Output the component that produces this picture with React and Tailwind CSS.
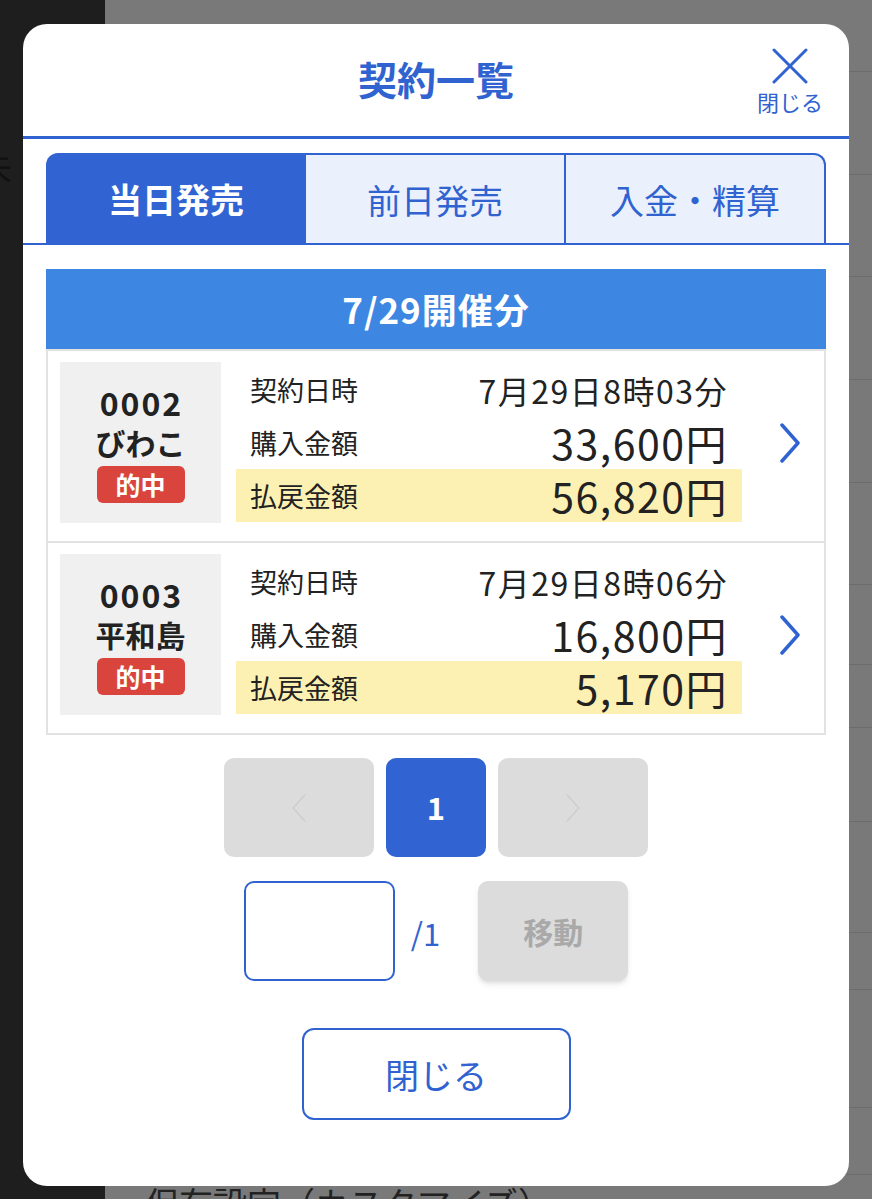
import React from 'react';

const contracts = [
  { no: '0002', place: 'びわこ', date: '7月29日8時03分', buy: '33,600円', pay: '56,820円' },
  { no: '0003', place: '平和島', date: '7月29日8時06分', buy: '16,800円', pay: '5,170円' },
];

const Chevron = ({ dir = 'right', className = '', stroke = 3 }) => (
  <svg viewBox="0 0 22 40" className={className} fill="none" stroke="currentColor" strokeWidth={stroke} strokeLinecap="round" strokeLinejoin="round">
    {dir === 'right' ? <polyline points="3,2 19,20 3,38" /> : <polyline points="19,2 3,20 19,38" />}
  </svg>
);

const ContractCard = ({ item, first }) => (
  <div className={`flex items-center border-2 border-[#e2e2e2] ${first ? '' : 'border-t-0'} pl-3 pt-[11px] pb-[18px]`}>
    <div className="w-[161px] h-[161px] bg-[#f0f0f0] flex flex-col items-center justify-center text-[#222]">
      <div className="text-[32px] font-bold leading-[40px] tracking-[2px] pl-[2px]">{item.no}</div>
      <div className="text-[30px] font-bold leading-[40px]">{item.place}</div>
      <div className="mt-1 h-[37px] w-[88px] rounded-[6px] bg-[#d9453d] text-white text-[25px] font-bold leading-[37px] text-center">的中</div>
    </div>
    <div className="ml-[15px] w-[506px] flex flex-col text-[#222]">
      <div className="h-[53px] flex items-center justify-between px-[14px]">
        <span className="text-[27px] leading-none">契約日時</span>
        <span className="text-[32px] leading-none tracking-[1.5px]">{item.date}</span>
      </div>
      <div className="h-[53px] flex items-center justify-between px-[14px]">
        <span className="text-[27px] leading-none">購入金額</span>
        <span className="text-[41px] leading-none tracking-[1.5px]">{item.buy}</span>
      </div>
      <div className="h-[53px] flex items-center justify-between px-[14px] bg-[#fcf1b2]">
        <span className="text-[27px] leading-none">払戻金額</span>
        <span className="text-[41px] leading-none tracking-[1.5px]">{item.pay}</span>
      </div>
    </div>
    <div className="flex-1 flex justify-center">
      <Chevron stroke={3.5} className="w-[22px] h-[40px] text-[#3063d0] ml-[14px]" />
    </div>
  </div>
);

export default function App() {
  return (
    <div className="relative w-[872px] h-[1199px] overflow-hidden flex font-['Noto_Sans_CJK_JP','Noto_Sans',sans-serif]">
      {/* background page */}
      <div className="w-[105px] bg-[#1e1e1e] pt-[150px]">
        <div className="text-[34px] text-[#111] -ml-[22px] leading-none">未</div>
      </div>
      <div className="flex-1 bg-[#797979] flex flex-col">
        {[72, 103, 102, 103, 103, 102, 80, 63, 94, 111, 57, 118, 67].map((h, i) => (
          <div key={i} style={{ height: h }} className="border-b border-[#6c6c6c] shrink-0" />
        ))}
        <div className="mt-auto h-[13px] overflow-hidden">
          <div className="text-[34px] text-[#222] leading-none ml-[40px]">保存設定（カスタマイズ）</div>
        </div>
      </div>

      {/* modal */}
      <div className="absolute left-[23px] top-[24px] w-[826px] h-[1162px] bg-white rounded-[24px] flex flex-col">
        <div className="relative h-[112px] flex items-center justify-center">
          <h1 className="text-[39px] font-bold text-[#3063d0] -mt-[4px]">契約一覧</h1>
          <div className="absolute right-[26px] top-[24px] flex flex-col items-center text-[#3063d0]">
            <svg viewBox="0 0 36 36" className="w-[36px] h-[36px]" stroke="currentColor" strokeWidth="3" strokeLinecap="round">
              <line x1="2" y1="2" x2="34" y2="34" />
              <line x1="34" y1="2" x2="2" y2="34" />
            </svg>
            <span className="text-[22px] leading-[28px] mt-[3px]">閉じる</span>
          </div>
        </div>
        <div className="h-[3px] bg-[#3063d0]" />

        {/* tabs */}
        <div className="pt-[14px] px-[23px] border-b-2 border-[#3063d0]">
          <div className="grid grid-cols-3 h-[90px]">
            <div className="bg-[#3164d2] rounded-tl-[12px] flex items-center justify-center text-white text-[34px] font-bold">当日発売</div>
            <div className="bg-[#eaf1fd] border-t-2 border-r-2 border-[#3063d0] flex items-center justify-center text-[#3063d0] text-[34px]">前日発売</div>
            <div className="bg-[#eaf1fd] border-t-2 border-r-2 border-[#3063d0] rounded-tr-[12px] flex items-center justify-center text-[#3063d0] text-[34px]">入金・精算</div>
          </div>
        </div>

        <div className="px-[23px] mt-[24px]">
          <div className="h-[80px] bg-[#3d87e2] flex items-center justify-center text-white text-[35px] font-bold tracking-[1px]">7/29開催分</div>
          {contracts.map((c, i) => (
            <ContractCard key={c.no} item={c} first={i === 0} />
          ))}
        </div>

        {/* pagination */}
        <div className="mt-[23px] flex justify-center gap-3">
          <div className="w-[150px] h-[99px] rounded-[10px] bg-[#dcdcdc] flex items-center justify-center">
            <Chevron dir="left" stroke={2} className="w-[16px] h-[30px] text-[#cdcdcd]" />
          </div>
          <div className="w-[100px] h-[99px] rounded-[10px] bg-[#3164d2] flex items-center justify-center text-white text-[31px] font-bold">1</div>
          <div className="w-[150px] h-[99px] rounded-[10px] bg-[#dcdcdc] flex items-center justify-center">
            <Chevron dir="right" stroke={2} className="w-[16px] h-[30px] text-[#cdcdcd]" />
          </div>
        </div>

        <div className="mt-[24px] flex justify-center items-center">
          <div className="w-[151px] h-[100px] rounded-[10px] border-2 border-[#3063d0] bg-white" />
          <span className="ml-[16px] text-[31px] text-[#3063d0] mt-[4px]">/1</span>
          <div className="ml-[38px] w-[150px] h-[100px] rounded-[10px] bg-[#dcdcdc] shadow-md flex items-center justify-center text-[#a9a9a9] text-[30px] font-bold">移動</div>
        </div>

        <div className="mt-[47px] flex justify-center">
          <div className="w-[269px] h-[92px] rounded-[12px] border-2 border-[#3063d0] flex items-center justify-center text-[#3063d0] text-[34px]">閉じる</div>
        </div>
      </div>
    </div>
  );
}
